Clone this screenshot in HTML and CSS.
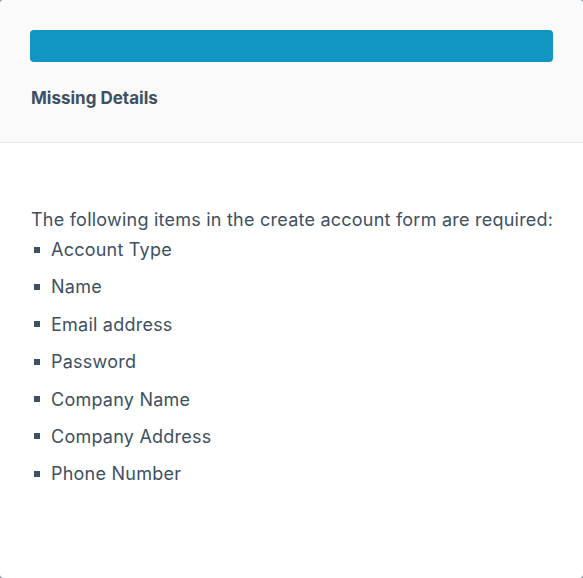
FILE: index.html
```html
<!DOCTYPE html>
<html>
<head>
<meta charset="utf-8">
<link rel="stylesheet" href="styles.css">
</head>
<body>
<div class="modal">
  <div class="modal-header">
    <div class="progress-bar"></div>
    <h2 class="modal-title">Missing Details</h2>
  </div>
  <div class="modal-body">
    <p class="intro">The following items in the create account form are required:</p>
    <ul class="missing-list">
      <li>Account Type</li>
      <li>Name</li>
      <li>Email address</li>
      <li>Password</li>
      <li>Company Name</li>
      <li>Company Address</li>
      <li>Phone Number</li>
    </ul>
  </div>
</div>
</body>
</html>
```
FILE: styles.css
```css
html, body {
  margin: 0;
  padding: 0;
  height: 100%;
  background: #8a939c;
}
body {
  font-family: Inter, "Liberation Sans", Arial, sans-serif;
  color: #3e5062;
}
.modal {
  height: 100%;
  box-sizing: border-box;
  background: #ffffff;
  border-radius: 4px;
  overflow: hidden;
}
.modal-header {
  background: #fafafa;
  border-bottom: 1px solid #e8e9ea;
  padding: 30px 30px 0 30px;
  height: 112px;
}
.progress-bar {
  height: 32px;
  background: #1195c2;
  border-radius: 4px;
}
.modal-title {
  margin: 24px 0 0 1px;
  font-size: 17px;
  line-height: 24px;
  font-weight: 700;
}
.modal-body {
  padding: 63px 30px 30px 31px;
}
.intro {
  margin: 0;
  font-size: 18px;
  letter-spacing: 0.23px;
  line-height: 27px;
  white-space: nowrap;
}
.missing-list {
  list-style: none;
  margin: 3px 0 0 0;
  padding: 0;
}
.missing-list li {
  display: flex;
  align-items: center;
  font-size: 18px;
  letter-spacing: 0.23px;
  line-height: 27px;
  margin-bottom: 10.4px;
}
.missing-list li::before {
  content: "";
  width: 6px;
  height: 6px;
  background: #3e5062;
  margin: 0 11px 0 3px;
  flex: none;
}
```
